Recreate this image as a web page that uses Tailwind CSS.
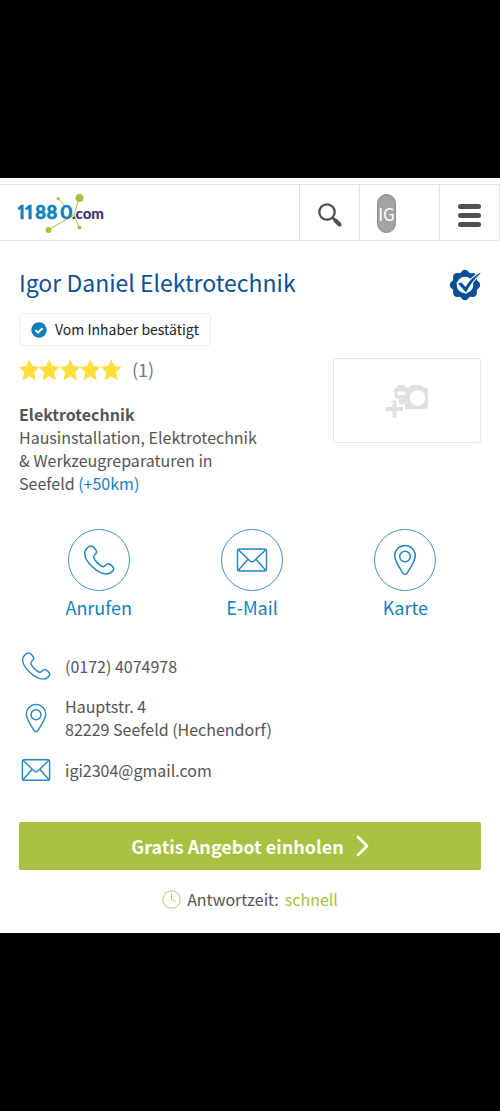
<!DOCTYPE html>
<html lang="de">
<head>
<meta charset="utf-8">
<meta name="viewport" content="width=device-width, initial-scale=1">
<title>Igor Daniel Elektrotechnik</title>
<script src="https://cdn.jsdelivr.net/npm/@tailwindcss/browser@4"></script>
</head>
<body class="min-h-screen bg-black font-['Noto_Sans_CJK_SC',sans-serif] text-[16px] leading-[23px] text-[#555]">
<svg class="hidden" aria-hidden="true">
  <symbol id="phone" viewBox="0 0 32 32"><path d="M2.500 6.200C4.200 3.600 6.300 2 8 2c2 0 5.600 4 5.600 5.900 0 2.300-3.600 3-3.100 5.200.7 3 6 8.500 9.100 9.600 2.300.8 3.200-3.100 5.600-3 1.900.1 5.500 3.300 5.500 5.100 0 2.100-3.400 5.200-7.200 5.200C14.500 30 2 17.500 1.700 9.700c0-1.200.2-2.500.8-3.500z"/></symbol>
  <symbol id="mail" viewBox="0 0 32 32"><rect x="1.500" y="5" width="29" height="22" rx="2"/><path d="M2.300 5.800 14 17q2 1.800 4 0L29.700 5.800M2.300 26.200l9.700-11M29.700 26.200 20 15.200"/></symbol>
  <symbol id="pin" viewBox="0 0 32 32"><path d="M16 1.500c-5.800 0-10.300 4.500-10.300 10.100 0 5.400 4.500 12 8.300 17.700q2 2.400 4 0c3.800-5.700 8.300-12.300 8.300-17.700C26.300 6 21.800 1.500 16 1.500z"/><circle cx="16" cy="12.500" r="5.300"/></symbol>
  <symbol id="star" viewBox="0 0 21 22"><path d="m10.500.3 3.200 6.700 7.300.8-5.400 5.400 1.600 8.300-6.700-4-6.700 4 1.600-8.300L0 7.800 7.300 7z"/></symbol>
</svg>
<main class="mt-[178px] bg-white pt-1.5">
  <header class="flex h-[57px] border-y border-[#e2e2e2]">
    <a href="#" aria-label="11880.com" class="flex-1 pl-[18px] pt-1">
      <svg class="h-12 w-[90px]" viewBox="0 0 90 48">
        <g fill="none" stroke="#a8c13f" stroke-width="1"><path d="M61 9 56 26 30 41M40 9l7 8M56 26l5 12"/></g>
        <g fill="#a8c13f"><circle cx="61.500" cy="9" r="4"/><circle cx="30.500" cy="41" r="3"/><circle cx="40" cy="9.500" r="1.500"/><circle cx="61.500" cy="38.500" r="2"/></g>
        <g class="font-['Lato',sans-serif] text-[19px] font-black proportional-nums" fill="#0f82bd" stroke="#0f82bd" stroke-width=".4"><text x="-1" y="30">11</text><text x="17" y="30">88</text><text x="42" y="30">0</text></g>
        <text x="54" y="30" fill="#3f2f7d" class="font-['Lato',sans-serif] text-[15px] font-black">.com</text>
      </svg>
    </a>
    <button type="button" aria-label="Suche" class="flex w-[60px] items-center justify-center border-l border-[#e2e2e2]">
      <svg class="mt-1 size-6" viewBox="0 0 24 24" fill="none" stroke="#505050" stroke-linecap="round"><circle cx="9" cy="9" r="7.700" stroke-width="2.300"/><path d="m15 15 1.500 1.500" stroke-width="2.500"/><path d="m17.500 17.500 4 4" stroke-width="4"/></svg>
    </button>
    <button type="button" class="w-20 border-l border-[#e2e2e2] pl-[17px] pt-px">
      <span class="flex h-[39px] w-[19px] items-center justify-center rounded-full border border-[#8b8b8b] bg-[#a3a3a3] text-[17px] text-white">IG</span>
    </button>
    <button type="button" aria-label="Menü" class="flex w-[61px] flex-col items-center justify-center gap-1 border-x border-[#e2e2e2] pt-1.5">
      <span class="h-[5px] w-[23px] rounded-full bg-[#505050]"></span>
      <span class="h-[5px] w-[23px] rounded-full bg-[#505050]"></span>
      <span class="h-[5px] w-[23px] rounded-full bg-[#505050]"></span>
    </button>
  </header>

  <div class="px-[19px] pt-6">
    <div class="flex items-start justify-between">
      <h1 class="text-[23px] leading-[34px] text-[#0f4f96]">Igor Daniel Elektrotechnik</h1>
      <svg class="mt-1 size-8" viewBox="0 0 32 32" role="img" aria-label="Geprüft">
        <g fill="#064f98"><circle cx="16" cy="16" r="13"/><circle cx="16" cy="5" r="4.200"/><circle cx="23.800" cy="8.200" r="4.200"/><circle cx="27" cy="16" r="4.200"/><circle cx="23.800" cy="23.800" r="4.200"/><circle cx="16" cy="27" r="4.200"/><circle cx="8.200" cy="23.800" r="4.200"/><circle cx="5" cy="16" r="4.200"/><circle cx="8.200" cy="8.200" r="4.200"/></g>
        <circle cx="16" cy="16" r="8.300" fill="#fff"/>
        <path d="m9 14.500 3.500-1 4 4.500C20 12 25 7 31.500 3.500L31 5C25 10 21 16 17 23.500z" fill="#064f98" stroke="#fff" stroke-width="2" paint-order="stroke"/>
      </svg>
    </div>
    <div class="mt-3 inline-flex h-[33px] items-center gap-2 rounded border border-[#ececec] px-[11px] text-[14px] text-[#222]">
      <svg class="size-4" viewBox="0 0 16 16" fill="none"><circle cx="8" cy="8" r="7.700" fill="#0f7dbb"/><path d="m4.500 8.200 2.500 2.500 4.500-4.500" stroke="#fff" stroke-width="2"/></svg>
      Vom Inhaber bestätigt
    </div>
    <div class="mt-3 flex justify-between">
      <div>
        <div class="flex items-center">
          <div class="flex w-[102px] fill-[#ffde3b]" role="img" aria-label="5 Sterne">
            <svg class="h-[22px] flex-1"><use href="#star"/></svg><svg class="h-[22px] flex-1"><use href="#star"/></svg><svg class="h-[22px] flex-1"><use href="#star"/></svg><svg class="h-[22px] flex-1"><use href="#star"/></svg><svg class="h-[22px] flex-1"><use href="#star"/></svg>
          </div>
          <span class="ml-[11px] text-[18px] text-[#777]">(1)</span>
        </div>
        <h2 class="mt-[22px] font-bold">Elektrotechnik</h2>
        <p class="max-w-[250px]">Hausinstallation, Elektrotechnik<br>&amp; Werkzeugreparaturen in<br>Seefeld <a href="#" class="text-[#0f82bd]">(+50km)</a></p>
      </div>
      <button type="button" aria-label="Foto hinzufügen" class="flex h-[85px] w-[148px] items-center justify-center rounded-xs border border-[#e8e8e8]">
        <svg class="h-9 w-[42px]" viewBox="0 0 42 36"><path fill="#e0e0e0" d="M8 7q0-2 2.500-2.500L12 2h6l1.500 2.500h3L25 2h10l2.500 2.500H39q3 0 3 3V23q0 3-3 3H19v-5h-6v-5l-4-1z"/><circle cx="31.500" cy="15" r="7.800" fill="#fff"/><rect x="11" y="8.500" width="8" height="3.500" rx="1" fill="#fff"/><path d="M8.500 17.500v17M0 26h17" stroke="#e0e0e0" stroke-width="4"/></svg>
      </button>
    </div>
  </div>

  <nav class="mt-[34px] grid grid-cols-3 pl-[22px] pr-[18px] text-center text-[18px] leading-6 text-[#0f82bd]">
    <a href="#" class="flex flex-col items-center gap-1"><span class="flex size-[62px] items-center justify-center rounded-full border border-[#3c93c3]"><svg class="size-8 fill-none stroke-[#2487bd] stroke-[1.5px]"><use href="#phone"/></svg></span>Anrufen</a>
    <a href="#" class="flex flex-col items-center gap-1"><span class="flex size-[62px] items-center justify-center rounded-full border border-[#3c93c3]"><svg class="size-8 fill-none stroke-[#2487bd] stroke-[1.5px]"><use href="#mail"/></svg></span>E-Mail</a>
    <a href="#" class="flex flex-col items-center gap-1"><span class="flex size-[62px] items-center justify-center rounded-full border border-[#3c93c3]"><svg class="size-8 fill-none stroke-[#2487bd] stroke-[1.5px]"><use href="#pin"/></svg></span>Karte</a>
  </nav>

  <address class="mt-8 flex flex-col gap-3.5 px-[21px] not-italic">
    <div class="flex items-center gap-3.5"><svg class="size-[30px] fill-none stroke-[#2487bd] stroke-[1.5px]"><use href="#phone"/></svg><a href="tel:01724074978">(0172) 4074978</a></div>
    <div class="flex items-center gap-3.5"><svg class="size-[30px] fill-none stroke-[#2487bd] stroke-[1.5px]"><use href="#pin"/></svg><p>Hauptstr. 4<br>82229 Seefeld (Hechendorf)</p></div>
    <div class="flex items-center gap-3.5"><svg class="size-[30px] fill-none stroke-[#2487bd] stroke-[1.5px]"><use href="#mail"/></svg><a href="mailto:igi2304@gmail.com">igi2304@gmail.com</a></div>
  </address>

  <div class="px-[19px] pb-[22px] pt-[37px]">
    <button type="button" class="flex h-12 w-full items-center justify-center gap-3 rounded-xs bg-[#a8c13f] text-[18px] font-bold text-white">Gratis Angebot einholen
      <svg class="h-[22px] w-[13px]" viewBox="0 0 13 22" fill="none" stroke="#fff" stroke-width="2.800" stroke-linecap="round" stroke-linejoin="round"><path d="m2 2 9 9-9 9"/></svg>
    </button>
    <p class="mt-[18px] flex items-center justify-center gap-1.5">
      <svg class="size-[19px]" viewBox="0 0 19 19" fill="none" stroke="#b5ca60"><circle cx="9.500" cy="9.500" r="8.700"/><path d="M9.500 3.500v6l4 2"/></svg>
      <span>Antwortzeit:</span><span class="text-[#a8c13f]">schnell</span>
    </p>
  </div>
</main>
</body>
</html>
